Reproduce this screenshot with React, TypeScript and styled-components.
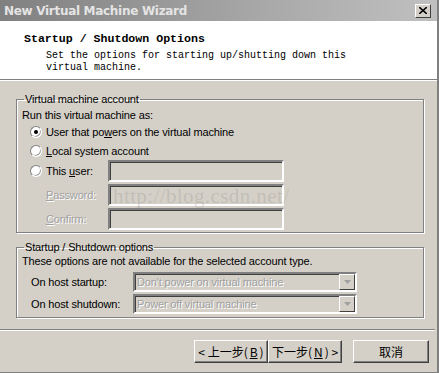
import styled, { createGlobalStyle } from "styled-components";

const GlobalStyle = createGlobalStyle`
  html, body {
    margin: 0;
    padding: 0;
    background: #d4d0c8;
  }
  body {
    font-family: "Liberation Sans", Arial, sans-serif;
    font-size: 11px;
    letter-spacing: -0.15px;
    color: #000;
  }
`;

const Window = styled.div`
  position: relative;
  width: 439px;
  height: 373px;
  box-sizing: border-box;
  background: #d4d0c8;
  border-right: 2px solid #808080;
  border-bottom: 1px solid #808080;
  display: flex;
  flex-direction: column;
  overflow: hidden;
`;

const TitleBar = styled.div`
  height: 21px;
  flex: none;
  display: flex;
  align-items: center;
  justify-content: space-between;
  padding: 0 4px 0 4px;
  background: linear-gradient(to right, #808080, #a8a8a8 60%, #c0c0c0);
`;

const TitleText = styled.span`
  color: #e4e4e4;
  font-weight: bold;
  font-size: 12px;
  font-family: "DejaVu Sans", "Liberation Sans", sans-serif;
  letter-spacing: -0.3px;
`;

const CloseButton = styled.div`
  width: 14px;
  height: 12px;
  background: #d4d0c8;
  border: 1px solid;
  border-color: #fff #404040 #404040 #fff;
  display: flex;
  align-items: center;
  justify-content: center;
  margin-right: 2px;
`;

const Header = styled.div`
  height: 59px;
  flex: none;
  background: #fff;
  border-bottom: 1px solid #808080;
  box-shadow: 0 1px 0 #fff;
  padding: 11px 0 0 24px;
  box-sizing: border-box;
  font-family: "Liberation Mono", "Noto Sans CJK SC", monospace;
  letter-spacing: 0;
`;

const HeaderTitle = styled.div`
  font-weight: bold;
  font-size: 11.6px;
  line-height: 14px;
`;

const HeaderSub = styled.div`
  font-size: 10px;
  line-height: 12px;
  margin-top: 4px;
  padding-left: 22px;
`;

const Body = styled.div`
  display: flex;
  flex-direction: column;
  gap: 8px;
  padding: 13px 13px 0 16px;
`;

const Group = styled.fieldset<{ $h: number }>`
  margin: 0;
  height: ${(p) => p.$h}px;
  box-sizing: border-box;
  border: 1px solid #808080;
  box-shadow: 1px 1px 0 #fff, inset 1px 1px 0 #fff;
  padding: 0 0 0 5px;
  min-width: 0;
  overflow: visible;
`;

const Legend = styled.legend`
  padding: 0 1px;
  margin-left: 2px;
  line-height: 12px;
`;

const Line = styled.div<{ $top?: number }>`
  line-height: 14px;
  padding-top: ${(p) => p.$top ?? 0}px;
`;

const RadioRow = styled.div<{ $h: number }>`
  display: flex;
  align-items: center;
  height: ${(p) => p.$h}px;
  padding-left: 8px;
`;

const RadioDot = styled.span<{ $checked?: boolean }>`
  width: 12px;
  height: 12px;
  border-radius: 50%;
  box-sizing: border-box;
  background: #fff;
  border: 1px solid;
  border-color: #808080 #fff #fff #808080;
  box-shadow: -1px -1px 0 #a0a0a0 inset;
  display: flex;
  align-items: center;
  justify-content: center;
  margin-right: 4px;
  flex: none;
  &::after {
    content: "";
    width: 4px;
    height: 4px;
    border-radius: 50%;
    background: ${(p) => (p.$checked ? "#000" : "transparent")};
  }
`;

const FieldLabel = styled.span<{ $w: number; $gray?: boolean; $pad?: number }>`
  width: ${(p) => p.$w}px;
  padding-left: ${(p) => p.$pad ?? 0}px;
  box-sizing: border-box;
  flex: none;
  color: ${(p) => (p.$gray ? "#a0a0a0" : "#000")};
  text-shadow: ${(p) => (p.$gray ? "1px 1px 0 #fff" : "none")};
`;

const U = styled.span`
  text-decoration: underline;
`;

const TextBox = styled.div`
  width: 176px;
  height: 22px;
  box-sizing: border-box;
  border: 2px solid;
  border-color: #808080 #fff #fff #808080;
  box-shadow: inset 1px 1px 0 #404040;
  background: #d4d0c8;
`;

const FieldRow = styled.div<{ $h?: number; $top?: number }>`
  display: flex;
  align-items: center;
  height: ${(p) => p.$h ?? 24}px;
  margin-top: ${(p) => p.$top ?? 0}px;
  padding-left: 8px;
`;

const Select = styled.div`
  width: 224px;
  height: 20px;
  box-sizing: border-box;
  border: 2px solid;
  border-color: #808080 #fff #fff #808080;
  box-shadow: inset 1px 1px 0 #404040;
  background: #d4d0c8;
  display: flex;
  align-items: center;
  justify-content: space-between;
  padding-left: 2px;
  color: #a0a0a0;
  text-shadow: 1px 1px 0 #fff;
`;

const SelectArrow = styled.span`
  width: 16px;
  height: 16px;
  box-sizing: border-box;
  border: 1px solid;
  border-color: #fff #404040 #404040 #fff;
  background: #d4d0c8;
  display: flex;
  align-items: center;
  justify-content: center;
`;

const Separator = styled.div`
  margin: 11px 2px 0 0;
  border-top: 1px solid #808080;
  border-bottom: 1px solid #fff;
`;

const Footer = styled.div`
  display: flex;
  justify-content: flex-end;
  padding: 9px 8px 0 0;
`;

const ButtonGroup = styled.div`
  display: flex;
  margin-right: 11px;
`;

const Button = styled.div<{ $w: number }>`
  width: ${(p) => p.$w}px;
  height: 23px;
  box-sizing: border-box;
  border: 1px solid;
  border-color: #fff #404040 #404040 #fff;
  box-shadow: inset -1px -1px 0 #808080;
  display: flex;
  align-items: center;
  justify-content: center;
  font-family: "Noto Sans CJK SC", "Liberation Sans", sans-serif;
  font-size: 12px;
  letter-spacing: 0;
  gap: 2px;
`;

const Watermark = styled.div`
  position: absolute;
  left: 113px;
  top: 184px;
  font-family: "Liberation Serif", serif;
  font-size: 21px;
  letter-spacing: 0.4px;
  color: rgba(150, 146, 140, 0.3);
  pointer-events: none;
`;

function Arrow() {
  return (
    <svg width="7" height="4" viewBox="0 0 7 4">
      <path d="M0 0h7L3.5 4z" fill="#a0a0a0" />
    </svg>
  );
}

export default function App() {
  return (
    <>
      <GlobalStyle />
      <Window>
        <TitleBar>
          <TitleText>New Virtual Machine Wizard</TitleText>
          <CloseButton>
            <svg width="8" height="7" viewBox="0 0 8 7">
              <path d="M0 0l8 7M8 0L0 7" stroke="#000" strokeWidth="1.6" />
            </svg>
          </CloseButton>
        </TitleBar>
        <Header>
          <HeaderTitle>Startup / Shutdown Options</HeaderTitle>
          <HeaderSub>
            Set the options for starting up/shutting down this
            <br />
            virtual machine.
          </HeaderSub>
        </Header>
        <Body>
          <Group $h={140}>
            <Legend>Virtual machine account</Legend>
            <Line $top={3}>Run this virtual machine as:</Line>
            <RadioRow $h={20}>
              <RadioDot $checked />
              <span>
                User that po<U>w</U>ers on the virtual machine
              </span>
            </RadioRow>
            <RadioRow $h={18}>
              <RadioDot />
              <span>
                <U>L</U>ocal system account
              </span>
            </RadioRow>
            <RadioRow $h={22}>
              <RadioDot />
              <FieldLabel $w={62}>
                This <U>u</U>ser:
              </FieldLabel>
              <TextBox />
            </RadioRow>
            <FieldRow $top={1}>
              <FieldLabel $w={78} $pad={16} $gray>
                <U>P</U>assword:
              </FieldLabel>
              <TextBox />
            </FieldRow>
            <FieldRow>
              <FieldLabel $w={78} $pad={16} $gray>
                <U>C</U>onfirm:
              </FieldLabel>
              <TextBox />
            </FieldRow>
          </Group>
          <Group $h={77}>
            <Legend>Startup / Shutdown options</Legend>
            <Line $top={1}>These options are not available for the selected account type.</Line>
            <FieldRow $h={22} $top={3}>
              <FieldLabel $w={103} $pad={1}>On host startup:</FieldLabel>
              <Select>
                Don't power on virtual machine
                <SelectArrow>
                  <Arrow />
                </SelectArrow>
              </Select>
            </FieldRow>
            <FieldRow $h={22}>
              <FieldLabel $w={103} $pad={1}>On host shutdown:</FieldLabel>
              <Select>
                Power off virtual machine
                <SelectArrow>
                  <Arrow />
                </SelectArrow>
              </Select>
            </FieldRow>
          </Group>
        </Body>
        <Separator />
        <Footer>
          <ButtonGroup>
            <Button $w={74}>&lt; 上一步(<U>B</U>)</Button>
            <Button $w={74}>下一步(<U>N</U>) &gt;</Button>
          </ButtonGroup>
          <Button $w={76}>取消</Button>
        </Footer>
        <Watermark>http://blog.csdn.net/</Watermark>
      </Window>
    </>
  );
}
